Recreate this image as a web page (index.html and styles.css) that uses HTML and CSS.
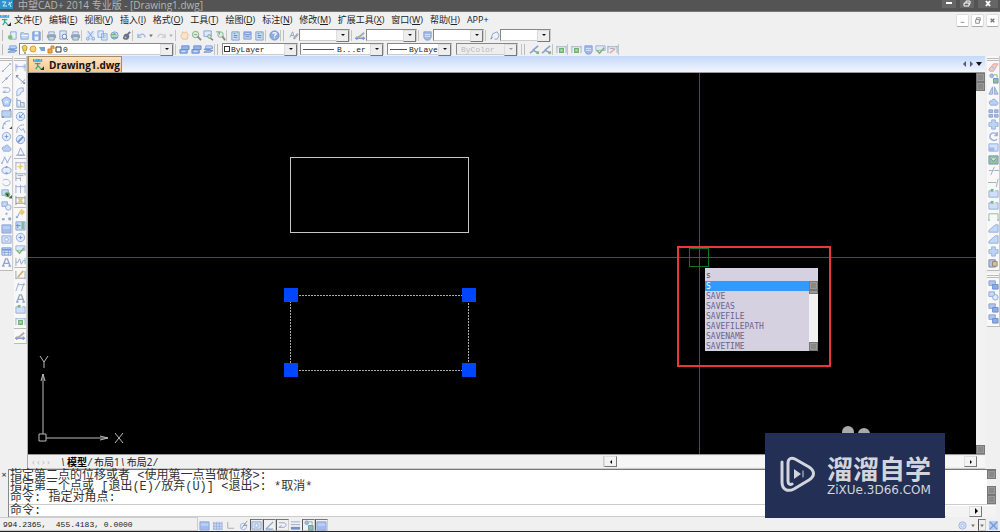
FILE: index.html
```html
<!DOCTYPE html>
<html lang="zh-CN">
<head>
<meta charset="utf-8">
<title>中望CAD+ 2014 专业版 - [Drawing1.dwg]</title>
<link rel="stylesheet" href="styles.css">
</head>
<body>
<svg class="defs" aria-hidden="true">
  <defs>
    <symbol id="logo" viewBox="0 0 12 12"><path d="M0 0h10v3H0z" fill="#2aa3dc"/><path d="M1 1h2M4 1h1M7 1h2" stroke="#d8f3ff"/><path d="M2 5h6M5 4v4l-2 3M5 7l4 4" stroke="#3aa58f" stroke-width="1.4" fill="none"/><path d="M8 12h4V8z" fill="#333"/></symbol>
    <symbol id="new" viewBox="0 0 12 12"><path d="M4 2h6v8H4z" fill="#e3efff" stroke="#7095cc"/><circle cx="3.500" cy="8" r="2.500" fill="#62b567"/></symbol>
    <symbol id="open" viewBox="0 0 12 12"><path d="M2 3h3l1 1h4v6H2z" fill="#b8d2f5" stroke="#6f97d6"/><path d="M3 6h7" stroke="#fff"/></symbol>
    <symbol id="save" viewBox="0 0 12 12"><path d="M2 2h8v9H2z" fill="#7ea5e8" stroke="#5279c9"/><path d="M4 2h4v3H4zM4 7h4v4H4z" fill="#e9f2ff"/></symbol>
    <symbol id="print" viewBox="0 0 12 12"><path d="M3 2h6v3H3z" fill="#dce8fa" stroke="#7890bb"/><path d="M1 5h10v4H1z" fill="#8193b5"/><path d="M3 7h6v4H3z" fill="#b8d3c5" stroke="#7185a8"/></symbol>
    <symbol id="preview" viewBox="0 0 12 12"><path d="M2 1h7v9H2z" fill="#d8e7fb" stroke="#6e8ec6"/><circle cx="7" cy="7" r="2.500" fill="#eaf3ff" stroke="#4d6797"/><path d="m9 9 2 2" stroke="#4d6797"/></symbol>
    <symbol id="cut" viewBox="0 0 12 12"><path d="M2 2h8v9H2z" fill="#d5e4fb"/><path d="m3 1 5 7M9 1 4 8" stroke="#668bd2"/><circle cx="3" cy="9.500" r="1.500" fill="none" stroke="#668bd2"/><circle cx="9" cy="9.500" r="1.500" fill="none" stroke="#668bd2"/></symbol>
    <symbol id="copy" viewBox="0 0 12 12"><path d="M1 1h6v7H1zM5 4h6v7H5z" fill="#d8e8ff" stroke="#7397df"/><path d="M6.500 6h3M6.500 8h3" stroke="#86a9e5"/></symbol>
    <symbol id="paste" viewBox="0 0 12 12"><circle cx="6" cy="6" r="4" fill="#b7d6fb" stroke="#5f8cd5"/><path d="M2 5h5l-2-2M10 8H4l2 2" fill="none" stroke="#51a65c" stroke-width="1.300"/></symbol>
    <symbol id="brush" viewBox="0 0 12 12"><path d="M3 6c1-3 6-2 6 1 0 4-5 5-7 2z" fill="#4b5569"/><path d="m7 5 3-3" stroke="#44506b" stroke-width="2"/><circle cx="5" cy="8" r="1" fill="#aebbd4"/></symbol>
    <symbol id="undo" viewBox="0 0 12 12"><path d="M2 4v4h4M2 8c2-4 7-5 8 0" fill="none" stroke="#8caee4" stroke-width="1.400"/></symbol>
    <symbol id="redo" viewBox="0 0 12 12"><path d="M10 4v4H6m4 0C8 4 3 3 2 8" fill="none" stroke="#c3c8d1" stroke-width="1.400"/></symbol>
    <symbol id="down" viewBox="0 0 6 12"><path d="M1 5h4L3 8z" fill="#555"/></symbol>
    <symbol id="pan" viewBox="0 0 12 12"><path d="M3 5 4 2l2 1 2-1 2 3-1 5H4L2 7z" fill="#fce2c3" stroke="#e8b076"/></symbol>
    <symbol id="zoom" viewBox="0 0 12 12"><circle cx="5" cy="5" r="3.500" fill="#d7efd5" stroke="#63966e"/><path d="m7 7 4 4" stroke="#7b746b" stroke-width="2"/><path d="M3.500 5h3" stroke="#4d8c5a"/></symbol>
    <symbol id="zoomw" viewBox="0 0 12 12"><path d="M1 1h8v6H1z" fill="#dae7fd" stroke="#668fe0"/><circle cx="7" cy="7" r="2" fill="#bce5b4" stroke="#638e6d"/><path d="m8 9 3 2" stroke="#615f68" stroke-width="1.500"/></symbol>
    <symbol id="zoomp" viewBox="0 0 12 12"><circle cx="6" cy="5" r="3" fill="#d8efdd" stroke="#6b987b"/><path d="m8 7 3 4" stroke="#77716b" stroke-width="2"/><path d="M1 2h4v3" fill="none" stroke="#48a660"/></symbol>
    <symbol id="sheet" viewBox="0 0 12 12"><path d="M2 2h8v9H2z" fill="#c1d7fa" stroke="#668dcf"/><path d="M4 4h2M4 6h4M4 8h4" stroke="#426bb8"/><path d="m7 2 2 2" stroke="#62b167"/></symbol>
    <symbol id="palette" viewBox="0 0 12 12"><path d="M2 2h8v8H2z" fill="#a7c4f3" stroke="#668ed3"/><path d="M3 3h6v2H3zM4 7h4" fill="#dcecff" stroke="#537bd0"/></symbol>
    <symbol id="help" viewBox="0 0 12 12"><circle cx="6" cy="6" r="5" fill="#789de0" stroke="#577cc1"/><path d="M4 4c1-2 4-1 4 0 0 1-2 1-2 3M6 8v1" fill="none" stroke="#fff" stroke-width="1.300"/></symbol>
    <symbol id="style" viewBox="0 0 12 12"><path d="m2 8 3-6 2 6M3 6h3" fill="none" stroke="#7890b6"/><path d="m6 9 4-5 1 1-4 5z" fill="#a8b4c5" stroke="#7e8999"/></symbol>
    <symbol id="dimstyle" viewBox="0 0 12 12"><path d="M0 9h11M2 7v4M9 7v4" stroke="#6487cb" stroke-width="1.400"/><path d="m4 8 6-5" stroke="#8f98a6" stroke-width="2"/><path d="m3 8 2-1" stroke="#d2914e" stroke-width="2"/></symbol>
    <symbol id="refedit" viewBox="0 0 12 12"><path d="M1 10 5 7l5 3M4 7l6-5" fill="none" stroke="#6f8dc4" stroke-width="1.600"/><path d="M8 8h3v3H8z" fill="#5fae65"/></symbol>
    <symbol id="refclose" viewBox="0 0 12 12"><path d="M1 2v8M11 2v8M1 3h10M3 5h5" fill="none" stroke="#8095c2"/><path d="m3 10 6-5" stroke="#e39a92" stroke-width="1.600"/></symbol>
    <symbol id="table" viewBox="0 0 12 12"><path d="M1 2h10v8H1z" fill="#d1e2fc" stroke="#5980d1"/><path d="M1 3h10v2H1z" fill="#567dd1"/><path d="M4 4v6M8 4v6M1 7h10" stroke="#6b91db"/></symbol>
    <symbol id="tablestyle" viewBox="0 0 12 12"><path d="M2 2h8v6l-2 3H4L2 8z" fill="#8eace8" stroke="#6a8cd0"/><path d="M3 5h6M3 7h6" stroke="#d6e4fc"/></symbol>
    <symbol id="leader" viewBox="0 0 12 12"><path d="m2 10 2-6 5-2 2 4-2 4H6" fill="none" stroke="#7590c9"/><path d="m2 10 2-2" stroke="#4b5e83"/></symbol>
    <symbol id="layers" viewBox="0 0 12 12"><path d="m1 9 3-2h7L8 9zM1 6l3-2h7L8 6z" fill="#9bbbf3" stroke="#547fc4"/><path d="M3 2h7v3H3z" fill="#b7d0fb" stroke="#6790df"/></symbol>
    <symbol id="layergo" viewBox="0 0 12 12"><path d="M3 2h8v4H3zM1 6h8v4H1z" fill="#7da6ee" stroke="#4e78c4"/><path d="M3 8h4" stroke="#e2efff"/></symbol>
    <symbol id="line" viewBox="0 0 12 12"><path d="m2 10 8-8" stroke="#7996c6"/><path d="M1 9h2v2H1zM9 1h2v2H9z" fill="#8aabe3"/></symbol>
    <symbol id="xline" viewBox="0 0 12 12"><path d="m1 11 10-10" stroke="#7996c6"/><path d="M5 5h2v2H5z" fill="#567fce"/></symbol>
    <symbol id="poly" viewBox="0 0 12 12"><path d="M2 3h6c3 1 2 5-1 5H2l3-2" fill="none" stroke="#7291c8"/></symbol>
    <symbol id="polygon" viewBox="0 0 12 12"><path d="m6 1 5 3-2 7H3L1 4z" fill="#a9c5f2" stroke="#5e88d3"/><path d="M4 5h4v3H4z" fill="#d7e7ff"/></symbol>
    <symbol id="rect" viewBox="0 0 12 12"><path d="M1 3h10v7H1z" fill="#adc9f3" stroke="#7697ce"/><path d="M1 10h2M9 2h2" stroke="#537ac1" stroke-width="2"/></symbol>
    <symbol id="arc" viewBox="0 0 12 12"><path d="M2 10c0-6 3-8 8-8" fill="none" stroke="#758fbd"/><path d="M1 9h2v2H1zM3 4h2v2H3z" fill="#779cdf"/><path d="M9 11h3V8z" fill="#222"/></symbol>
    <symbol id="circle" viewBox="0 0 12 12"><circle cx="6" cy="6" r="4.500" fill="#dceaff" stroke="#7095dc"/><path d="M6 4v4M4 6h4" stroke="#577fc9"/></symbol>
    <symbol id="cloud" viewBox="0 0 12 12"><path d="M2 9c-2-3 1-5 2-3 0-4 5-3 5 0 3 0 2 4 0 4H3z" fill="#a8c7f4" stroke="#7999d0"/></symbol>
    <symbol id="spline" viewBox="0 0 12 12"><path d="m1 10 3-6 3 5 4-7" fill="none" stroke="#6e91ce"/><path d="M0 9h2v2H0zM3 3h2v2H3zM6 8h2v2H6z" fill="#91afe5"/></symbol>
    <symbol id="ellipse" viewBox="0 0 12 12"><ellipse cx="6" cy="6" rx="5" ry="3.500" fill="#dce9fe" stroke="#6f90cb"/><path d="M5 1h2v2H5zM5 8h2v2H5z" fill="#6086d0"/></symbol>
    <symbol id="earc" viewBox="0 0 12 12"><path d="M2 4C4 1 10 3 10 6c0 5-8 4-8 1" fill="none" stroke="#8ba2c9"/></symbol>
    <symbol id="insert" viewBox="0 0 12 12"><path d="M1 2h7v6H1z" fill="#bfd8f8" stroke="#7099ca"/><circle cx="7" cy="7" r="3" fill="#60a56e"/><path d="M5 6h3v4M9 11h3V8z" stroke="#356b47"/></symbol>
    <symbol id="block" viewBox="0 0 12 12"><path d="M1 2h6v5H1z" fill="#b9d3f7" stroke="#6d93cf"/><circle cx="8" cy="8" r="3" fill="#dce9ff" stroke="#7494c9"/></symbol>
    <symbol id="points" viewBox="0 0 12 12"><path d="M5 2h2v2H5zM1 8h3v2H1zM8 7h3v3H8z" fill="#7892bd"/></symbol>
    <symbol id="hatch" viewBox="0 0 12 12"><path d="M1 2h10v9H1z" fill="#8fafee" stroke="#7895cf"/><path d="M2 5h8" stroke="#adc6f6" stroke-width="3"/></symbol>
    <symbol id="grid" viewBox="0 0 12 12"><path d="M1 2h10v9H1z" fill="#c3d3f3"/><path d="M2 2v9M5 2v9M8 2v9M11 2v9M1 4h10M1 7h10M1 10h10" stroke="#8aa4da"/></symbol>
    <symbol id="region" viewBox="0 0 12 12"><path d="M1 2h10v8H1z" fill="#c9dbf7" stroke="#7c98cb"/><circle cx="6" cy="6" r="2" fill="#edf5ff" stroke="#799bd5"/></symbol>
    <symbol id="text" viewBox="0 0 12 12"><path d="m2 10 3-8h2l3 8M4 7h4M1 10h3M8 10h3" fill="none" stroke="#7a91bd" stroke-width="1.500"/></symbol>
    <symbol id="dim" viewBox="0 0 12 12"><path d="M1 2v8M11 2v8M1 5h10M3 3 1 5l2 2M9 3l2 2-2 2" fill="none" stroke="#829ed0"/></symbol>
    <symbol id="adim" viewBox="0 0 12 12"><path d="m2 3 7 6M1 4l3-3M7 10l4-4" stroke="#6684b9"/><path d="M1 1h2v2H1zM9 9h2v2H9z" fill="#5d6d8b"/></symbol>
    <symbol id="arcdim" viewBox="0 0 12 12"><path d="M2 11V7c0-4 3-5 7-5v4C7 6 6 7 6 9z" fill="#e0ebfe" stroke="#7797d0"/></symbol>
    <symbol id="ord" viewBox="0 0 12 12"><path d="M2 1v10h9M2 4h4v6M6 6h4v5" fill="#c4d8f6" stroke="#7290c5"/></symbol>
    <symbol id="radius" viewBox="0 0 12 12"><circle cx="6" cy="6" r="4.500" fill="#dfebff" stroke="#6d92d7"/><path d="m5 7 5-5M5 7h3M5 7V4" stroke="#5277bd"/></symbol>
    <symbol id="jog" viewBox="0 0 12 12"><path d="M2 11c0-6 2-9 8-9M4 5l3 3 2-2 2 5" fill="none" stroke="#7793c6"/></symbol>
    <symbol id="oblique" viewBox="0 0 12 12"><path d="m1 11 3-9M7 11l3-9M3 4h8" fill="none" stroke="#7f97c6"/></symbol>
    <symbol id="diameter" viewBox="0 0 12 12"><circle cx="6" cy="6" r="4.500" fill="#d9e7ff" stroke="#6488d3"/><path d="m3 9 6-6" stroke="#587dc6" stroke-width="2"/></symbol>
    <symbol id="angle" viewBox="0 0 12 12"><path d="M3 10 6 2l4 8zM1 10h10" fill="none" stroke="#7392ce"/></symbol>
    <symbol id="track" viewBox="0 0 12 12"><path d="m2 10 8-8M2 10h8" fill="none" stroke="#6f8fcf" stroke-width="1.400"/></symbol>
    <symbol id="qdim" viewBox="0 0 12 12"><path d="M1 2v9M11 2v9M1 3h10" stroke="#8b9ab5"/><path d="m6 3 1 3 3 1-3 1-1 3-2-3-2-1 3-1z" fill="#eac45b"/></symbol>
    <symbol id="base" viewBox="0 0 12 12"><path d="M1 1v10M6 7v4M11 2v3M1 3h10M1 8h5M3 5h6" fill="none" stroke="#7f93b5"/></symbol>
    <symbol id="cont" viewBox="0 0 12 12"><path d="M1 2v9M6 2v9M11 2v9M1 4h10" fill="none" stroke="#8199c5"/></symbol>
    <symbol id="space" viewBox="0 0 12 12"><path d="M1 1v10M11 1v10M1 3h10M1 9h10" stroke="#6c7889"/><path d="m4 4 4 4M8 4 4 8" stroke="#d5b942" stroke-width="2"/></symbol>
    <symbol id="qleader" viewBox="0 0 12 12"><path d="m2 11 3-6" stroke="#6884b5"/><path d="m7 1 4 3-3 4-4-3z" fill="#e9bd50"/><path d="M1 9h2v2H1z" fill="#7094d9"/></symbol>
    <symbol id="tol" viewBox="0 0 12 12"><path d="M1 2h10v9H1z" fill="#bed4f3" stroke="#6c90c7"/><path d="M7 2h3v8H7z" fill="#67ac8c"/><path d="M3 4v5M1 6h5" stroke="#4d76b9"/></symbol>
    <symbol id="insp" viewBox="0 0 12 12"><path d="M1 2h10v5H1z" fill="#dae7fb" stroke="#88a1ca"/><path d="m2 7 3 3 5-6" fill="none" stroke="#58aa5b" stroke-width="1.600"/></symbol>
    <symbol id="jogl" viewBox="0 0 12 12"><path d="M1 2v9M11 2v7M1 7h2l2-4 2 6 2-4h2" fill="none" stroke="#7b95c6"/></symbol>
    <symbol id="edit" viewBox="0 0 12 12"><path d="M1 2v9M11 2v9M1 10h10" fill="none" stroke="#748bad"/><path d="m3 9 6-7" stroke="#d1a14b" stroke-width="2"/></symbol>
    <symbol id="update" viewBox="0 0 12 12"><path d="M1 2v8M11 2v8M1 3h10" fill="none" stroke="#83a0c9"/><path d="M4 5h4v4H4z" fill="#a7d79d" stroke="#4da351" stroke-width="1.400"/></symbol>
    <symbol id="erase" viewBox="0 0 12 12"><path d="m1 8 5-6h5L6 10H2z" fill="#f8c0b5" stroke="#df8879"/><path d="m4 5 4 3" stroke="#a9bde7" stroke-width="2"/></symbol>
    <symbol id="objcopy" viewBox="0 0 12 12"><circle cx="4" cy="3" r="2" fill="#8ab0e9" stroke="#6d8dbd"/><path d="M6 6h5v5H6z" fill="#79b17f" stroke="#4979ae"/><path d="M6 2h4v3" fill="none" stroke="#66a76f"/></symbol>
    <symbol id="mirror" viewBox="0 0 12 12"><path d="M5 2v8H1zM7 2v8h4z" fill="#a8c4f0" stroke="#7494c5"/></symbol>
    <symbol id="array" viewBox="0 0 12 12"><path d="M1 2h4v3H1zM7 2h4v3H7zM1 7h4v3H1zM7 7h4v3H7z" fill="#8baee8" stroke="#7391c7"/></symbol>
    <symbol id="move" viewBox="0 0 12 12"><path d="M4 4V1h4v3h3v4H8v3H4V8H1V4z" fill="#b2ccf5" stroke="#7f9fd2"/></symbol>
    <symbol id="rotate" viewBox="0 0 12 12"><path d="M10 4C6 0 2 3 2 6s4 6 8 3M10 1v4H7" fill="none" stroke="#86a0cf" stroke-width="1.600"/></symbol>
    <symbol id="scale" viewBox="0 0 12 12"><path d="M1 2h10v8H1z" fill="#c8dcfb" stroke="#799ce0"/><path d="M1 6h6v4H1z" fill="#88aded"/></symbol>
    <symbol id="stretch" viewBox="0 0 12 12"><path d="M1 2h10v9H1z" fill="#7db392" stroke="#567ca9"/><path d="m3 5 3 3 3-3" fill="#d4e9d9" stroke="#397f52"/></symbol>
    <symbol id="trim" viewBox="0 0 12 12"><path d="M1 6h3M7 6h5M3 11l4-9" stroke="#8397b6"/><path d="M4 6h2" stroke="#61a867"/></symbol>
    <symbol id="extend" viewBox="0 0 12 12"><path d="M0 6h6M9 11l2-9" stroke="#8498b7"/><path d="M6 6h3" stroke="#68aa6c"/></symbol>
    <symbol id="break" viewBox="0 0 12 12"><path d="M4 3H1v7h10V3H8" fill="#c7daf7" stroke="#7e9ed0"/><path d="M3 1h3v3H3z" fill="#5ca866"/></symbol>
    <symbol id="join" viewBox="0 0 12 12"><path d="M1 10V3h10v7" fill="none" stroke="#78ad83"/><path d="M0 9h2v2H0zM10 9h2v2h-2z" fill="#9faecb"/></symbol>
    <symbol id="chamfer" viewBox="0 0 12 12"><path d="M1 10V8l7-6h3v8z" fill="#b7d1f6" stroke="#7a9bd1"/></symbol>
    <symbol id="explode" viewBox="0 0 12 12"><path d="M1 3h7v8H1z" fill="#9fb5d8" stroke="#63748e"/><path d="M5 5h5v5H5z" fill="#d2b779" stroke="#6e6960"/></symbol>
    <symbol id="front" viewBox="0 0 12 12"><path d="M1 2h7v5H1z" fill="#9cb9ea" stroke="#6d8dc5"/><path d="M5 6h6v5H5z" fill="#719be0" stroke="#4976bb"/></symbol>
    <symbol id="axes" viewBox="0 0 12 12"><path d="M3 2v7h7" fill="none" stroke="#8e9aab"/></symbol>
    <symbol id="polar" viewBox="0 0 12 12"><circle cx="6" cy="7" r="3.500" fill="none" stroke="#88a5d8"/><path d="m4 9 6-8M6 6h4" stroke="#6680a9"/></symbol>
    <symbol id="lwt" viewBox="0 0 12 12"><path d="M1 2h10M1 5h10" stroke="#789cdd"/><path d="M1 9h10" stroke="#5579bd" stroke-width="3"/></symbol>
    <symbol id="gear" viewBox="0 0 12 12"><circle cx="6" cy="6" r="4" fill="#c8d8fa" stroke="#8ca8df"/><circle cx="6" cy="6" r="1.500" fill="#fff" stroke="#8da9df"/></symbol>
    <symbol id="full" viewBox="0 0 12 12"><path d="M1 1h10v10H1z" fill="#a7c6f4"/><path d="m2 2 8 8M10 2l-8 8" stroke="#537dc8" stroke-width="1.400"/></symbol>
  </defs>
</svg>

<div class="app">
  <header class="title-bar">
    <svg class="app-icon" viewBox="0 0 14 10" aria-hidden="true"><path d="M0 0h13v9H0z" fill="#2f91c9"/><path d="M2 2h4L3 6h4M8 5l4-3M9 2l2 5" stroke="#c9efff" fill="none"/></svg>
    <h1 class="title">中望CAD+ 2014 专业版 - [Drawing1.dwg]</h1>
    <div class="window-buttons">
      <button aria-label="最小化"><svg viewBox="0 0 12 8"><path d="M3 3h6" stroke="#fff" stroke-width="2"/></svg></button>
      <button aria-label="还原"><svg viewBox="0 0 12 8"><path d="M5 3V1h4v3H8M3 3h5v3H3z" stroke="#fff" fill="none"/></svg></button>
      <button class="wide" aria-label="关闭"><svg viewBox="0 0 12 8"><path d="m4 1 4 5M8 1 4 6" stroke="#fff" stroke-width="2"/></svg></button>
    </div>
  </header>

  <nav class="menu-bar">
    <svg class="icon" aria-hidden="true"><use href="#logo"/></svg>
    <div class="menus">
      <button>文件(<u>F</u>)</button><button>编辑(<u>E</u>)</button><button>视图(<u>V</u>)</button><button>插入(<u>I</u>)</button><button>格式(<u>O</u>)</button><button>工具(<u>T</u>)</button><button>绘图(<u>D</u>)</button><button>标注(<u>N</u>)</button><button>修改(<u>M</u>)</button><button>扩展工具(<u>X</u>)</button><button>窗口(<u>W</u>)</button><button>帮助(<u>H</u>)</button><button>APP+</button>
    </div>
    <div class="doc-buttons">
      <button aria-label="最小化文档"><svg viewBox="0 0 12 12"><path d="M4 8h4" stroke="#888"/></svg></button>
      <button aria-label="还原文档"><svg viewBox="0 0 12 12"><path d="M5 5V3h4v3H8M4 5h4v4H4z" stroke="#888" fill="none"/></svg></button>
      <button aria-label="关闭文档"><svg viewBox="0 0 12 12"><path d="m4 4 4 4M8 4 4 8" stroke="#777" stroke-width="1.500"/></svg></button>
    </div>
  </nav>

  <div class="toolbar" role="toolbar" aria-label="标准">
    <span class="grip"></span>
    <button class="tool" aria-label="新建"><svg class="icon"><use href="#new"/></svg></button>
    <button class="tool" aria-label="打开"><svg class="icon"><use href="#open"/></svg></button>
    <button class="tool" aria-label="保存"><svg class="icon"><use href="#save"/></svg></button>
    <span class="sep"></span>
    <button class="tool" aria-label="打印"><svg class="icon"><use href="#print"/></svg></button>
    <button class="tool" aria-label="打印预览"><svg class="icon"><use href="#preview"/></svg></button>
    <button class="tool" aria-label="发布"><svg class="icon"><use href="#print"/></svg></button>
    <span class="sep"></span>
    <button class="tool" aria-label="剪切"><svg class="icon"><use href="#cut"/></svg></button>
    <button class="tool" aria-label="复制"><svg class="icon"><use href="#copy"/></svg></button>
    <button class="tool" aria-label="粘贴"><svg class="icon"><use href="#paste"/></svg></button>
    <button class="tool" aria-label="特性匹配"><svg class="icon"><use href="#brush"/></svg></button>
    <span class="sep"></span>
    <button class="tool" aria-label="撤销"><svg class="icon"><use href="#undo"/></svg></button>
    <button class="tool narrow" aria-label="撤销列表"><svg class="icon"><use href="#down"/></svg></button>
    <button class="tool" aria-label="重做"><svg class="icon"><use href="#redo"/></svg></button>
    <button class="tool narrow" aria-label="重做列表"><svg class="icon faint"><use href="#down"/></svg></button>
    <span class="sep"></span>
    <button class="tool" aria-label="平移"><svg class="icon"><use href="#pan"/></svg></button>
    <button class="tool" aria-label="实时缩放"><svg class="icon"><use href="#zoom"/></svg></button>
    <button class="tool" aria-label="窗口缩放"><svg class="icon"><use href="#zoomw"/></svg></button>
    <button class="tool" aria-label="缩放上一个"><svg class="icon"><use href="#zoomp"/></svg></button>
    <span class="sep"></span>
    <button class="tool" aria-label="特性"><svg class="icon"><use href="#sheet"/></svg></button>
    <button class="tool" aria-label="设计中心"><svg class="icon"><use href="#palette"/></svg></button>
    <button class="tool" aria-label="工具选项板"><svg class="icon"><use href="#sheet"/></svg></button>
    <span class="sep"></span>
    <button class="tool" aria-label="帮助"><svg class="icon"><use href="#help"/></svg></button>
    <span class="sep"></span><span class="grip"></span>
    <button class="tool" aria-label="文字样式"><svg class="icon"><use href="#style"/></svg></button>
    <span class="combo style-combo"><select aria-label="文字样式列表"><option></option></select></span>
    <span class="sep"></span>
    <button class="tool" aria-label="标注样式"><svg class="icon"><use href="#dimstyle"/></svg></button>
    <span class="combo style-combo"><select aria-label="标注样式列表"><option></option></select></span>
    <span class="sep"></span>
    <button class="tool" aria-label="表格样式"><svg class="icon"><use href="#tablestyle"/></svg></button>
    <span class="combo style-combo"><select aria-label="表格样式列表"><option></option></select></span>
    <span class="sep"></span>
    <button class="tool" aria-label="引线样式"><svg class="icon"><use href="#leader"/></svg></button>
    <span class="combo style-combo"><select aria-label="引线样式列表"><option></option></select></span>
  </div>

  <div class="toolbar" role="toolbar" aria-label="图层与特性">
    <span class="grip"></span>
    <button class="tool" aria-label="图层特性"><svg class="icon"><use href="#layers"/></svg></button>
    <span class="combo layer-combo"><select aria-label="图层"><option>0</option></select>
      <svg class="layer-state" viewBox="0 0 42 10" aria-hidden="true"><path d="M3 7V5c-3-3 4-6 4-1L6 7z" fill="#f3d34c" stroke="#b6983a"/><path d="M4 9h2" stroke="#555"/><circle cx="13" cy="5" r="3" fill="#ffd16b" stroke="#e49a34"/><path d="M19 3h6v4h-4z" fill="#79a3d9"/><path d="M28 5h4v4h-4zM31 5V2h3v3" fill="#f4a43b" stroke="#cb8135"/><path d="M36 3h5v5h-5z" fill="#fff" stroke="#333"/></svg>
    </span>
    <span class="sep"></span>
    <button class="tool" aria-label="置为当前"><svg class="icon"><use href="#layergo"/></svg></button>
    <button class="tool" aria-label="上一图层"><svg class="icon"><use href="#layergo"/></svg></button>
    <button class="tool" aria-label="图层状态"><svg class="icon"><use href="#layers"/></svg></button>
    <span class="sep"></span><span class="grip"></span>
    <span class="combo color-combo"><select aria-label="颜色"><option>ByLayer</option></select><i class="swatch"></i></span>
    <span class="combo linetype-combo"><select aria-label="线型"><option>B...er</option></select></span>
    <span class="combo weight-combo"><select aria-label="线宽"><option>ByLayer</option></select></span>
    <span class="combo plot-combo"><select aria-label="打印样式" disabled><option>ByColor</option></select></span>
    <span class="sep"></span><span class="grip"></span>
    <button class="tool" aria-label="编辑块"><svg class="icon"><use href="#refedit"/></svg></button>
    <button class="tool" aria-label="编辑参照"><svg class="icon"><use href="#refedit"/></svg></button>
    <span class="sep"></span>
    <button class="tool" aria-label="附着参照"><svg class="icon"><use href="#update"/></svg></button>
    <span class="sep"></span>
    <button class="tool" aria-label="添加到工作集"><svg class="icon"><use href="#update"/></svg></button>
    <button class="tool" aria-label="从工作集删除"><svg class="icon"><use href="#tablestyle"/></svg></button>
    <button class="tool" aria-label="保存参照"><svg class="icon"><use href="#insp"/></svg></button>
    <button class="tool" aria-label="关闭参照"><svg class="icon"><use href="#refclose"/></svg></button>
    <span class="sep"></span>
  </div>

  <main class="workspace">
    <aside class="rails">
      <div class="rail draw-rail" role="toolbar" aria-label="绘图">
        <button class="tool" aria-label="直线"><svg class="icon"><use href="#line"/></svg></button>
        <button class="tool" aria-label="构造线"><svg class="icon"><use href="#xline"/></svg></button>
        <button class="tool" aria-label="多段线"><svg class="icon"><use href="#poly"/></svg></button>
        <button class="tool" aria-label="正多边形"><svg class="icon"><use href="#polygon"/></svg></button>
        <button class="tool" aria-label="矩形"><svg class="icon"><use href="#rect"/></svg></button>
        <button class="tool" aria-label="圆弧"><svg class="icon"><use href="#arc"/></svg></button>
        <button class="tool" aria-label="圆"><svg class="icon"><use href="#circle"/></svg></button>
        <button class="tool" aria-label="修订云线"><svg class="icon"><use href="#cloud"/></svg></button>
        <button class="tool" aria-label="样条曲线"><svg class="icon"><use href="#spline"/></svg></button>
        <button class="tool" aria-label="椭圆"><svg class="icon"><use href="#ellipse"/></svg></button>
        <button class="tool" aria-label="椭圆弧"><svg class="icon"><use href="#earc"/></svg></button>
        <button class="tool" aria-label="插入块"><svg class="icon"><use href="#insert"/></svg></button>
        <button class="tool" aria-label="创建块"><svg class="icon"><use href="#block"/></svg></button>
        <button class="tool" aria-label="点"><svg class="icon"><use href="#points"/></svg></button>
        <button class="tool" aria-label="图案填充"><svg class="icon"><use href="#hatch"/></svg></button>
        <button class="tool" aria-label="面域"><svg class="icon"><use href="#region"/></svg></button>
        <button class="tool" aria-label="表格"><svg class="icon"><use href="#table"/></svg></button>
        <button class="tool" aria-label="多行文字"><svg class="icon"><use href="#text"/></svg></button>
      </div>
      <div class="rail dim-rail" role="toolbar" aria-label="标注">
        <button class="tool" aria-label="线性标注"><svg class="icon"><use href="#dim"/></svg></button>
        <button class="tool" aria-label="对齐标注"><svg class="icon"><use href="#adim"/></svg></button>
        <button class="tool" aria-label="弧长标注"><svg class="icon"><use href="#arcdim"/></svg></button>
        <button class="tool" aria-label="坐标标注"><svg class="icon"><use href="#ord"/></svg></button>
        <span class="rule"></span>
        <button class="tool" aria-label="半径标注"><svg class="icon"><use href="#radius"/></svg></button>
        <button class="tool" aria-label="折弯标注"><svg class="icon"><use href="#jog"/></svg></button>
        <button class="tool" aria-label="直径标注"><svg class="icon"><use href="#diameter"/></svg></button>
        <button class="tool" aria-label="角度标注"><svg class="icon"><use href="#angle"/></svg></button>
        <span class="rule"></span>
        <button class="tool" aria-label="快速标注"><svg class="icon"><use href="#qdim"/></svg></button>
        <button class="tool" aria-label="基线标注"><svg class="icon"><use href="#base"/></svg></button>
        <button class="tool" aria-label="连续标注"><svg class="icon"><use href="#cont"/></svg></button>
        <button class="tool" aria-label="等距标注"><svg class="icon"><use href="#space"/></svg></button>
        <span class="rule"></span>
        <button class="tool" aria-label="快速引线"><svg class="icon"><use href="#qleader"/></svg></button>
        <button class="tool" aria-label="公差"><svg class="icon"><use href="#tol"/></svg></button>
        <button class="tool" aria-label="圆心标记"><svg class="icon"><use href="#circle"/></svg></button>
        <button class="tool" aria-label="检验"><svg class="icon"><use href="#insp"/></svg></button>
        <button class="tool" aria-label="折弯线性"><svg class="icon"><use href="#jogl"/></svg></button>
        <span class="rule"></span>
        <button class="tool" aria-label="编辑标注"><svg class="icon"><use href="#edit"/></svg></button>
        <button class="tool" aria-label="倾斜标注"><svg class="icon"><use href="#oblique"/></svg></button>
        <button class="tool" aria-label="编辑标注文字"><svg class="icon"><use href="#text"/></svg></button>
        <button class="tool" aria-label="标注替代"><svg class="icon"><use href="#break"/></svg></button>
        <button class="tool" aria-label="标注更新"><svg class="icon"><use href="#update"/></svg></button>
        <span class="rule"></span>
        <button class="tool" aria-label="标注样式管理"><svg class="icon"><use href="#dimstyle"/></svg></button>
      </div>
    </aside>

    <section class="document">
      <div class="tab-strip">
        <button class="doc-tab"><svg class="icon" aria-hidden="true"><use href="#logo"/></svg>Drawing1.dwg</button>
        <div class="tab-nav">
          <button aria-label="上一个标签"><svg viewBox="0 0 6 6"><path d="M4 0v6L1 3z" fill="#557"/></svg></button>
          <button aria-label="下一个标签"><svg viewBox="0 0 6 6"><path d="M1 0v6l3-3z" fill="#557"/></svg></button>
          <button aria-label="标签列表"><svg viewBox="0 0 6 6"><path d="M0 1h6L3 5z" fill="#111"/></svg></button>
        </div>
      </div>
      <div class="view">
        <div class="canvas">
          <svg class="drawing" role="img" aria-label="图形窗口">
            <rect class="beam" x="671" y="0" width="1" height="100%"/>
            <rect class="beam" x="0" y="184" width="100%" height="1"/>
            <rect class="pickbox" x="661" y="175" width="19" height="18"/>
            <rect class="shape" x="262" y="84" width="178" height="75"/>
            <rect class="shape selected" x="262" y="222" width="178" height="75"/>
            <path class="grips" d="M256 215h14v14h-14zM434 215h14v14h-14zM256 290h14v14h-14zM434 290h14v14h-14z"/>
            <g class="ucs"><path d="M11 361h7v7h-7zM15 361v-60M13 308l2-7 2 7M18 365h62M72 363l8 2-8 2"/><path d="m12 283 4 6 4-6M16 289v6M87 360l8 10M95 360l-8 10"/></g>
            <rect class="marker" x="650" y="174" width="152" height="119"/>
          </svg>
          <div class="autocomplete">
            <input type="text" value="s" aria-label="动态输入">
            <div class="suggest">
              <ul role="listbox" aria-label="命令建议"><li role="option" aria-selected="true">S</li><li role="option">SAVE</li><li role="option">SAVEAS</li><li role="option">SAVEFILE</li><li role="option">SAVEFILEPATH</li><li role="option">SAVENAME</li><li role="option">SAVETIME</li></ul>
              <div class="scroll light"><button aria-label="向上"></button><button class="thumb" aria-label="滑块"></button><button class="last" aria-label="向下"></button></div>
            </div>
          </div>
        </div>
        <div class="scroll"><button aria-label="向上滚动"></button><button aria-label="滑块"></button><button class="last" aria-label="向下滚动"></button></div>
      </div>
      <div class="layout-bar">
        <span class="layout-nav">‹ ‹ › ›</span>
        <span class="layouts"><i>\</i><button class="current">模型</button><i>/</i><button>布局1</button><i>\</i><button>布局2</button><i>/</i></span>
        <span class="hscroll">
          <button aria-label="向左滚动"><svg viewBox="0 0 6 6"><path d="M4 1v4L2 3z"/></svg></button>
          <button aria-label="向右滚动"><svg viewBox="0 0 6 6"><path d="M2 1v4l2-2z"/></svg></button>
        </span>
      </div>
    </section>

    <aside class="right-rails">
      <div class="rail modify-rail" role="toolbar" aria-label="修改">
        <button class="tool" aria-label="删除"><svg class="icon"><use href="#erase"/></svg></button>
        <button class="tool" aria-label="复制对象"><svg class="icon"><use href="#objcopy"/></svg></button>
        <button class="tool" aria-label="镜像"><svg class="icon"><use href="#mirror"/></svg></button>
        <button class="tool" aria-label="偏移"><svg class="icon"><use href="#cloud"/></svg></button>
        <button class="tool" aria-label="阵列"><svg class="icon"><use href="#array"/></svg></button>
        <button class="tool" aria-label="移动"><svg class="icon"><use href="#move"/></svg></button>
        <button class="tool" aria-label="旋转"><svg class="icon"><use href="#rotate"/></svg></button>
        <button class="tool" aria-label="缩放"><svg class="icon"><use href="#scale"/></svg></button>
        <button class="tool" aria-label="拉伸"><svg class="icon"><use href="#stretch"/></svg></button>
        <button class="tool" aria-label="修剪"><svg class="icon"><use href="#trim"/></svg></button>
        <button class="tool" aria-label="延伸"><svg class="icon"><use href="#extend"/></svg></button>
        <button class="tool" aria-label="打断于点"><svg class="icon"><use href="#break"/></svg></button>
        <button class="tool" aria-label="打断"><svg class="icon"><use href="#break"/></svg></button>
        <button class="tool" aria-label="合并"><svg class="icon"><use href="#join"/></svg></button>
        <button class="tool" aria-label="倒角"><svg class="icon"><use href="#chamfer"/></svg></button>
        <button class="tool" aria-label="圆角"><svg class="icon"><use href="#chamfer"/></svg></button>
        <button class="tool" aria-label="编辑长度"><svg class="icon"><use href="#move"/></svg></button>
        <button class="tool" aria-label="分解"><svg class="icon"><use href="#explode"/></svg></button>
      </div>
      <div class="rail order-rail" role="toolbar" aria-label="绘图次序">
        <button class="tool" aria-label="前置"><svg class="icon"><use href="#front"/></svg></button>
        <button class="tool" aria-label="后置"><svg class="icon"><use href="#block"/></svg></button>
        <button class="tool" aria-label="置于对象之上"><svg class="icon"><use href="#front"/></svg></button>
        <button class="tool" aria-label="置于对象之下"><svg class="icon"><use href="#front"/></svg></button>
      </div>
    </aside>
  </main>

  <section class="command">
    <div class="command-grip"><button aria-label="关闭命令行">×</button></div>
    <div class="command-body">
      <div class="history-row">
        <div class="history">指定第二点的位移或者 &lt;使用第一点当做位移&gt;:<br>指定第二个点或 [退出(E)/放弃(U)] &lt;退出&gt;: *取消*<br>命令: 指定对角点:</div>
        <div class="scroll"><button aria-label="历史向上"></button><button class="last" aria-label="历史滑块"></button><button aria-label="历史向下"></button></div>
      </div>
      <div class="prompt-row">
        <label for="cmd">命令:</label><input id="cmd" type="text">
        <span class="prompt-scroll"><button aria-label="命令向右"><svg viewBox="0 0 6 6"><path d="M2 0v6l3-3z"/></svg></button></span>
      </div>
    </div>
  </section>

  <footer class="status">
    <output class="coords">994.2365,&nbsp; 455.4183, 0.0000</output>
    <div class="toggles">
      <button class="tool" aria-label="捕捉"><svg class="icon"><use href="#hatch"/></svg></button>
      <button class="tool" aria-label="栅格"><svg class="icon"><use href="#grid"/></svg></button>
      <button class="tool" aria-label="正交"><svg class="icon"><use href="#axes"/></svg></button>
      <button class="tool" aria-label="极轴"><svg class="icon"><use href="#polar"/></svg></button>
      <button class="tool on" aria-label="对象捕捉"><svg class="icon"><use href="#region"/></svg></button>
      <button class="tool on" aria-label="对象追踪"><svg class="icon"><use href="#track"/></svg></button>
      <button class="tool on" aria-label="动态UCS"><svg class="icon"><use href="#poly"/></svg></button>
      <button class="tool" aria-label="线宽显示"><svg class="icon"><use href="#lwt"/></svg></button>
      <button class="tool on" aria-label="动态输入开关"><svg class="icon"><use href="#objcopy"/></svg></button>
      <button class="tool on" aria-label="模型空间"><svg class="icon"><use href="#hatch"/></svg></button>
    </div>
    <div class="status-end">
      <button class="tool" aria-label="设置"><svg class="icon"><use href="#gear"/></svg></button>
      <button class="tool narrow" aria-label="设置列表"><svg class="icon"><use href="#down"/></svg></button>
      <button class="tool narrow on" aria-label="托盘列表"><svg class="icon"><use href="#down"/></svg></button>
      <button class="tool" aria-label="全屏"><svg class="icon"><use href="#full"/></svg></button>
    </div>
  </footer>

  <div class="watermark">
    <svg class="dots" viewBox="0 0 28 7" aria-hidden="true"><circle cx="6" cy="6" r="6"/><circle cx="22" cy="8" r="6"/></svg>
    <svg class="play" viewBox="0 0 36 38" aria-hidden="true"><path d="M2 6v20c0 8 6 10 12 7l15-9c6-4 6-9 0-13L15 3C11 1 8 3 8 7v18c0 3 2 4 4 3"/><path class="fill" d="m14 13 7 5-7 5z"/><path class="thin" d="M23 15v6"/></svg>
    <div class="brand"><strong>溜溜自学</strong><span>ZiXUe.3D66.COM</span></div>
  </div>
</div>
</body>
</html>
```

FILE: styles.css
```css
* { box-sizing: border-box; }
html, body { height: 100%; }
body {
  margin: 0;
  overflow: hidden;
  background: #f0f0f0;
  font: 9px/12px "Open Sans", "Noto Sans CJK SC", sans-serif;
  color: #222;
}
button, input, select { font: inherit; color: inherit; margin: 0; padding: 0; border: 0; border-radius: 0; background: none; }
button { display: flex; align-items: center; justify-content: center; white-space: nowrap; }
svg { display: block; }
.defs { position: absolute; width: 0; height: 0; }
.app { position: relative; display: flex; flex-direction: column; height: 100vh; border-bottom: 1px solid #222; }

.title-bar { display: flex; height: 12px; flex: none; background: #545454; border-bottom: 1px solid #777; }
.app-icon { width: 14px; height: 10px; }
.title { flex: 1; margin: 0 0 0 4px; font: 10px/11px "Open Sans", "Noto Sans CJK SC", sans-serif; color: #b4b4b4; white-space: nowrap; }
.window-buttons { display: flex; gap: 4px; padding-right: 2px; }
.window-buttons button { width: 14px; height: 8px; background: #666; }
.window-buttons .wide { width: 20px; }
.window-buttons svg { width: 12px; height: 8px; }

.menu-bar { display: flex; align-items: center; height: 16px; flex: none; }
.icon { width: 11px; height: 11px; }
.menus { display: flex; flex: 1; gap: 7px; padding-left: 3px; }
.menus u { text-underline-offset: 1px; }
.doc-buttons { display: flex; gap: 2px; padding-right: 1px; }
.doc-buttons button { width: 13px; height: 13px; background: #fff; border: 1px solid #ddd; border-bottom-color: #aaa; border-radius: 2px; }
.doc-buttons svg { width: 11px; height: 11px; }

.toolbar { display: flex; align-items: center; height: 14px; flex: none; padding-left: 2px; }
.tool { width: 12px; height: 12px; flex: none; }
.tool .icon { opacity: .8; }
.narrow { width: 8px; }
.tool .faint { opacity: .4; }
.sep { width: 3px; height: 11px; flex: none; border-left: 1px solid #c4c4c4; }
.grip { width: 4px; height: 11px; flex: none; border-left: 1px solid #bbb; }
.combo { position: relative; display: flex; height: 12px; flex: none; margin: 0 1px; background: #fff; border: 1px solid #888; border-right-color: #ccc; border-bottom-color: #ccc; }
.combo select { width: 100%; appearance: none; padding: 1px 10px 0 2px; font: 8px/9px "Liberation Mono", monospace; color: #222; overflow: hidden; }
.combo::before { content: ""; position: absolute; right: 0; top: 0; width: 11px; height: 10px; background: #eee; border: 1px solid #ddd; border-right-color: #777; border-bottom-color: #777; pointer-events: none; }
.combo::after { content: ""; position: absolute; right: 4px; top: 4px; border: 2px solid transparent; border-top-color: #111; pointer-events: none; }
.style-combo { width: 51px; margin-left: 0; }
.layer-combo { width: 155px; }
.layer-combo select { padding-left: 43px; }
.layer-state { position: absolute; left: 0; top: 0; width: 42px; height: 10px; pointer-events: none; }
.color-combo { width: 76px; }
.color-combo select { padding-left: 8px; }
.swatch { position: absolute; left: 1px; top: 2px; width: 6px; height: 6px; border: 1px solid #333; }
.linetype-combo { width: 84px; }
.linetype-combo select { padding-left: 36px; background: linear-gradient(#555, #555) 2px 5px / 31px 1px no-repeat; }
.weight-combo { width: 65px; margin-left: 2px; }
.weight-combo select { padding-left: 21px; background: linear-gradient(#555, #555) 2px 5px / 17px 1px no-repeat; }
.plot-combo { width: 62px; margin: 0 3px; background: #eee; }
.plot-combo select { padding-left: 4px; color: #bbb; opacity: 1; }
.plot-combo::after { border-top-color: #999; }

.workspace { display: flex; flex: 1; min-height: 0; }
.rails { display: flex; gap: 1px; width: 28px; flex: none; align-items: flex-start; border-right: 1px solid #aaa; }
.rail { display: flex; flex-direction: column; align-items: center; justify-content: space-between; width: 13px; padding: 6px 0 2px; background: #f8f8f8; border-right: 1px solid #ccc; border-bottom: 1px solid #bbb; background-image: linear-gradient(#bbb, #bbb), linear-gradient(#bbb, #bbb); background-size: 100% 1px; background-position: 0 2px, 0 4px; background-repeat: no-repeat; }
.rail .tool { height: 11px; }
.draw-rail { height: 215px; }
.dim-rail { height: 288px; }
.modify-rail { height: 215px; }
.order-rail { height: 54px; margin-top: 2px; }
.rule { width: 100%; height: 1px; background: #bbb; }
.right-rails { display: flex; flex-direction: column; align-items: flex-end; width: 15px; flex: none; }
.document { display: flex; flex-direction: column; flex: 1; min-width: 0; }
.tab-strip { display: flex; align-items: flex-end; justify-content: space-between; height: 17px; flex: none; background: linear-gradient(#c5d8f8, #f2f6fe); border-bottom: 1px solid #999; }
.doc-tab { height: 16px; padding: 0 1px 0 4px; gap: 5px; background: linear-gradient(#fde3be, #f8c88e); border: 1px solid #a98a62; border-bottom: 0; font: bold 10px/14px "Open Sans", sans-serif; color: #111; }
.tab-nav { display: flex; height: 16px; padding-right: 3px; gap: 1px; }
.tab-nav svg { width: 6px; height: 6px; }
.view { display: flex; flex: 1; min-height: 0; }
.canvas { position: relative; flex: 1; background: #000; overflow: hidden; }
.drawing { width: 100%; height: 100%; fill: none; shape-rendering: crispEdges; }
.beam { fill: #0a7428; }
.pickbox { stroke: #0a7428; }
.shape { stroke: #c8c8c8; }
.selected { stroke: #aaa; stroke-dasharray: 2 1; }
.grips { fill: #0046ff; stroke: none; }
.ucs { stroke: #bbb; shape-rendering: auto; }
.marker { stroke: #e8383d; stroke-width: 2; }
.scroll { display: flex; flex-direction: column; width: 9px; flex: none; background: #f2f2f2; }
.scroll button { height: 9px; background: #888; border: 1px solid #777; box-shadow: inset 0 0 0 1px #999; }
.scroll .last { margin-top: auto; }
.autocomplete { position: absolute; left: 677px; top: 195px; width: 113px; background: #d5d1e1; font: 8px/10px "DejaVu Sans Mono", monospace; color: #6b638f; }
.autocomplete input { display: block; width: 100%; height: 13px; padding: 1px 1px 0; color: #444; }
.suggest { display: flex; }
.suggest ul { flex: 1; margin: 0; padding: 0; list-style: none; }
.suggest li { padding: 1px 0 0 1px; line-height: 9px; }
.suggest li[aria-selected] { background: #3399ff; color: #fff; }
.light .thumb { height: 4px; }
.layout-bar { display: flex; height: 15px; flex: none; align-items: center; border-top: 1px solid #999; border-bottom: 1px solid #ccc; }
.layout-nav { width: 33px; padding-left: 4px; color: #bbb; white-space: nowrap; }
.layouts { display: flex; flex: 1; gap: 1px; padding-top: 1px; font-size: 10px; }
.layouts i { width: 5px; }
.current { font-weight: bold; color: #000; }
.hscroll { display: flex; flex: 1; max-width: 382px; justify-content: space-between; padding-right: 8px; background: #f6f6f6; border-left: 1px solid #ccc; }
.hscroll button, .prompt-scroll button { width: 13px; height: 11px; background: #f3f3f3; border: 1px solid #ddd; border-right-color: #777; border-bottom-color: #777; }
.hscroll svg, .prompt-scroll svg { width: 6px; height: 6px; }

.command { display: flex; flex: none; height: 48px; padding-right: 4px; }
.command-grip { width: 9px; flex: none; border-right: 1px solid #888; }
.command-grip button { width: 8px; height: 11px; }
.command-body { display: flex; flex-direction: column; flex: 1; min-width: 0; background: #fff; border-top: 1px solid #777; border-bottom: 1px solid #ccc; font: 12px/11px "Liberation Mono", "Noto Sans CJK SC", monospace; color: #333; }
.history-row { display: flex; flex: 1; border-bottom: 1px solid #ccc; }
.history { flex: 1; padding: 1px 1px 0; white-space: nowrap; }
.prompt-row { display: flex; height: 12px; flex: none; align-items: center; }
.prompt-row label { padding-left: 1px; }
.prompt-row input { flex: 1; min-width: 0; }
.prompt-scroll { display: flex; justify-content: flex-end; width: 50px; padding-right: 14px; background: #f3f3f3; }

.status { display: flex; align-items: flex-end; height: 14px; flex: none; background: #f0f0f0; }
.coords { width: 198px; padding: 1px 0 0 3px; border: 1px solid #ccc; border-left: 0; font: 8px/11px "Liberation Mono", monospace; white-space: nowrap; color: #222; }
.toggles { display: flex; flex: 1; }
.toggles .tool { width: 13px; }
.status .on { border: 1px solid #ccc; border-left-color: #555; border-top-color: #777; }
.status-end { display: flex; gap: 1px; padding-right: 1px; }

.watermark { position: absolute; right: 55px; bottom: 13px; display: flex; align-items: center; gap: 11px; width: 180px; height: 85px; padding: 0 0 2px 15px; background: #232f54; color: #d3d5dc; }
.dots { position: absolute; left: 77px; top: -7px; width: 28px; height: 7px; fill: #aaa; }
.play { width: 36px; height: 38px; fill: none; stroke: #d3d5dc; stroke-width: 3; stroke-linecap: round; }
.play .fill { fill: #d3d5dc; stroke: none; }
.play .thin { stroke-width: 1; }
.brand { display: flex; flex-direction: column; }
.brand strong { font: bold 26px/30px "Noto Sans CJK SC", sans-serif; }
.brand span { font: 12px/14px "DejaVu Sans", sans-serif; }
```
